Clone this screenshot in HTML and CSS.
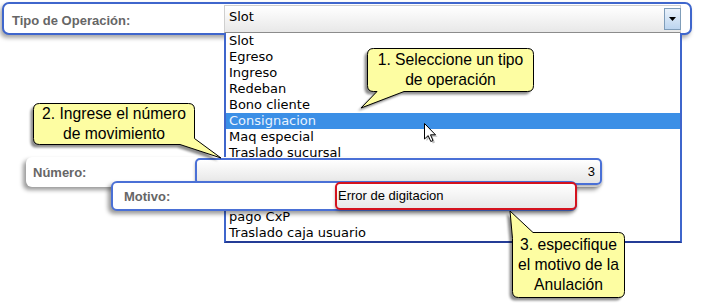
FILE: index.html
```html
<!DOCTYPE html>
<html lang="es">
<head>
<meta charset="utf-8">
<title>Anulación</title>
<link rel="stylesheet" href="styles.css">
</head>
<body>
<div class="page">
  <div class="panel-top">
    <span class="lbl lbl-tipo">Tipo de Operación:</span>
    <div class="select">
      <span class="sel-text">Slot</span>
      <span class="sel-btn"><svg width="7" height="4" viewBox="0 0 7 4"><path d="M0 0H7L3.5 4Z" fill="#000"/></svg></span>
      <ul class="dropdown">
        <li>Slot</li>
        <li>Egreso</li>
        <li>Ingreso</li>
        <li>Redeban</li>
        <li>Bono cliente</li>
        <li class="sel">Consignacion</li>
        <li>Maq especial</li>
        <li>Traslado sucursal</li>
        <li>Pago premio</li>
        <li>Ajuste</li>
        <li>pago CxC</li>
        <li>pago CxP</li>
        <li>Traslado caja usuario</li>
      </ul>
    </div>
  </div>

  <div class="row-num">
    <span class="lbl lbl-num">Número:</span>
    <div class="num-input">3</div>
  </div>

  <div class="row-mot">
    <span class="lbl lbl-mot">Motivo:</span>
    <div class="mot-input">Error de digitacion</div>
  </div>

  <div class="callout c1">
    <svg class="bubble" width="167" height="44" viewBox="0 0 167 44">
      <defs><filter id="b1" x="-20%" y="-20%" width="140%" height="160%"><feGaussianBlur stdDeviation="1.2"/></filter></defs>
      <path transform="translate(-3 3)" filter="url(#b1)" fill="rgba(0,0,0,0.45)" d="M6.5 0.5H160.5Q166.5 0.5 166.5 6.5V37.5Q166.5 43.5 160.5 43.5H37L-6 60L10 43.5H6.5Q0.5 43.5 0.5 37.5V6.5Q0.5 0.5 6.5 0.5Z"/>
      <path fill="#fdfda2" stroke="#000" stroke-width="1" d="M6.5 0.5H160.5Q166.5 0.5 166.5 6.5V37.5Q166.5 43.5 160.5 43.5H37L-6 60L10 43.5H6.5Q0.5 43.5 0.5 37.5V6.5Q0.5 0.5 6.5 0.5Z"/>
    </svg>
    <div class="callout-text">1. Seleccione un tipo<br>de operación</div>
  </div>

  <div class="callout c2">
    <svg class="bubble" width="162" height="42" viewBox="0 0 162 42">
      <defs><filter id="b2" x="-20%" y="-20%" width="140%" height="160%"><feGaussianBlur stdDeviation="1.2"/></filter></defs>
      <path transform="translate(-3 3)" filter="url(#b2)" fill="rgba(0,0,0,0.45)" d="M6.5 0.5H155.5Q161.5 0.5 161.5 6.5V35.5L188 55L147 41.5H6.5Q0.5 41.5 0.5 35.5V6.5Q0.5 0.5 6.5 0.5Z"/>
      <path fill="#fdfda2" stroke="#000" stroke-width="1" d="M6.5 0.5H155.5Q161.5 0.5 161.5 6.5V35.5L188 55L147 41.5H6.5Q0.5 41.5 0.5 35.5V6.5Q0.5 0.5 6.5 0.5Z"/>
    </svg>
    <div class="callout-text">2. Ingrese el número<br>de movimiento</div>
  </div>

  <div class="callout c3">
    <svg class="bubble" width="113" height="66" viewBox="0 0 113 66">
      <defs><filter id="b3" x="-20%" y="-40%" width="140%" height="160%"><feGaussianBlur stdDeviation="1.2"/></filter></defs>
      <path transform="translate(-3 3)" filter="url(#b3)" fill="rgba(0,0,0,0.45)" d="M21 0.5H106.5Q112.5 0.5 112.5 6.5V59.5Q112.5 65.5 106.5 65.5H6.5Q0.5 65.5 0.5 59.5V6.5L-2 -21Z"/>
      <path fill="#fdfda2" stroke="#000" stroke-width="1" d="M21 0.5H106.5Q112.5 0.5 112.5 6.5V59.5Q112.5 65.5 106.5 65.5H6.5Q0.5 65.5 0.5 59.5V6.5L-2 -21Z"/>
    </svg>
    <div class="callout-text">3. especifique<br>el motivo de la<br>Anulación</div>
  </div>

  <svg class="cursor" width="13" height="20" viewBox="0 0 13 20">
    <path d="M1.5 1.5L1.5 17L5.2 13.6L7.8 19.5L10 18.5L7.5 12.8L12.5 12.8Z" fill="rgba(0,0,0,0.25)" transform="translate(1 1)"/>
    <path d="M0.5 0.5L0.5 16L4.2 12.6L6.8 18.5L9 17.5L6.5 11.8L11.5 11.8Z" fill="#fff" stroke="#000" stroke-width="1" stroke-linejoin="round"/>
  </svg>
</div>
</body>
</html>
```

FILE: styles.css
```css
* { box-sizing: border-box; }

body {
  margin: 0;
  background: #fff;
}

.page {
  position: relative;
  width: 701px;
  height: 306px;
  overflow: hidden;
  font-family: "DejaVu Sans", Verdana, sans-serif;
  background: #fff;
}

.lbl {
  font-family: "Liberation Sans", Arial, sans-serif;
  font-weight: bold;
  font-size: 13px;
  color: #666;
  flex-shrink: 0;
  white-space: nowrap;
}

/* Top row */
.panel-top {
  margin: 2px 0 0 2px;
  width: 690px;
  height: 33px;
  border: 2px solid #3f66cc;
  border-radius: 7px;
  background: #fff;
  box-shadow: -2px 3px 4px rgba(0, 0, 0, 0.35);
  display: flex;
}

.lbl-tipo {
  width: 220px;
  padding-left: 8px;
  align-self: center;
  margin-top: 3px;
}

.select {
  position: relative;
  flex-shrink: 0;
  align-self: flex-end;
  width: 457px;
  height: 28px;
  border: 1px solid #cfcfcf;
  border-bottom-color: #8c8c8c;
  background: linear-gradient(#ffffff, #e8e8e8);
  display: flex;
  align-items: flex-start;
  justify-content: space-between;
}

.sel-text {
  padding-left: 4px;
  font-size: 13px;
  line-height: 22px;
  color: #000;
}

.sel-btn {
  width: 17px;
  height: 22px;
  margin-top: 2px;
  margin-right: -1px;
  border: 1px solid #7f9db9;
  background: linear-gradient(#eaf2fb, #bcd5ef);
  display: flex;
  align-items: center;
  justify-content: center;
}

.dropdown {
  position: absolute;
  top: 27px;
  left: -1px;
  width: 458px;
  margin: 0;
  padding: 0;
  list-style: none;
  background: #fff;
  border: 2px solid #3f66cc;
  border-top: none;
  border-bottom: 2px solid #243c96;
  z-index: 1;
}

.dropdown li {
  height: 16px;
  line-height: 16px;
  padding-left: 3px;
  font-size: 13px;
  color: #000;
  white-space: nowrap;
}

.dropdown li.sel {
  background: #3b8fe6;
  color: #e8f3ff;
}

/* Número row */
.row-num {
  position: relative;
  z-index: 2;
  margin: 122px 0 0 26px;
  width: 576px;
  height: 30px;
  display: flex;
  align-items: flex-start;
  background: #fff;
  border-radius: 6px;
  box-shadow: -3px 3px 4px rgba(0, 0, 0, 0.4);
}

.lbl-num {
  width: 169px;
  padding-left: 7px;
  align-self: center;
}

.num-input {
  flex-shrink: 0;
  margin-top: 1px;
  width: 407px;
  height: 27px;
  border: 2px solid #4a70d6;
  border-radius: 5px;
  background: linear-gradient(#ffffff, #e6e6e6);
  box-shadow: 0 2px 3px rgba(0, 0, 0, 0.3);
  text-align: right;
  padding-right: 5px;
  font-family: "Liberation Sans", Arial, sans-serif;
  font-size: 13px;
  line-height: 23px;
  color: #000;
}

/* Motivo row */
.row-mot {
  position: relative;
  z-index: 2;
  margin: -6px 0 0 111px;
  width: 466px;
  height: 30px;
  border: 2px solid #4a70d6;
  border-radius: 6px;
  background: #fff;
  box-shadow: -3px 3px 4px rgba(0, 0, 0, 0.4);
  display: flex;
  align-items: center;
}

.lbl-mot {
  width: 222px;
  padding-left: 11px;
}

.mot-input {
  flex-shrink: 0;
  width: 242px;
  height: 28px;
  margin-right: -2px;
  border: 2px solid #d4121e;
  border-radius: 5px;
  background: linear-gradient(#ffffff, #e8e8e8);
  box-shadow: 0 2px 3px rgba(0, 0, 0, 0.3);
  padding-left: 1px;
  font-family: "Liberation Sans", Arial, sans-serif;
  font-size: 13px;
  line-height: 24px;
  color: #000;
  white-space: nowrap;
}

/* Callouts */
.callout {
  position: absolute;
  z-index: 3;
  display: flex;
  align-items: center;
  justify-content: center;
}

.callout .bubble {
  position: absolute;
  left: 0;
  top: 0;
  overflow: visible;
}

.callout-text {
  position: relative;
  text-align: center;
  font-family: "Liberation Sans", Arial, sans-serif;
  font-size: 15.7px;
  line-height: 20px;
  color: #000;
  white-space: nowrap;
}

.c1 { left: 367px; top: 48px; width: 167px; height: 44px; }
.c2 { left: 33px; top: 103px; width: 162px; height: 42px; }
.c3 { left: 512px; top: 232px; width: 113px; height: 66px; }

.cursor {
  position: absolute;
  z-index: 4;
  left: 424px;
  top: 123px;
  overflow: visible;
}
```
